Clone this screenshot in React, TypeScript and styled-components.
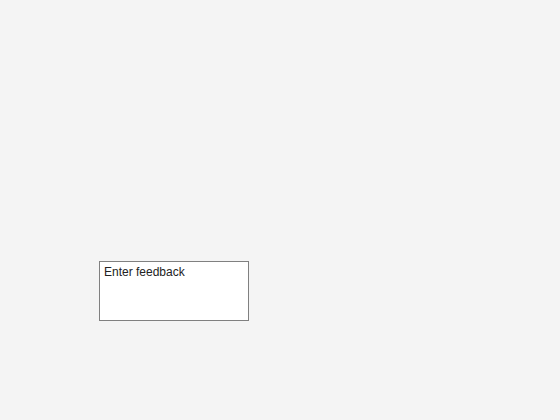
import styled, { createGlobalStyle } from 'styled-components';

const GlobalStyle = createGlobalStyle`
    html, body {
        margin: 0;
        padding: 0;
        background: #f4f4f4;
    }
`;

const Page = styled.main`
    min-height: 420px;
    box-sizing: border-box;
    padding: 261px 0 0 99px;
    display: flex;
    align-items: flex-start;
`;

const FeedbackBox = styled.textarea`
    box-sizing: border-box;
    width: 150px;
    height: 60px;
    margin: 0;
    padding: 3px 4px;
    border: 1px solid #808080;
    border-radius: 0;
    background: #fff;
    color: #222;
    font-family: 'Liberation Sans', Arial, sans-serif;
    font-size: 12px;
    line-height: 14px;
    resize: none;
    outline: none;
`;

const App = () => (
    <>
        <GlobalStyle />
        <Page>
            <FeedbackBox defaultValue='Enter feedback' />
        </Page>
    </>
);

export default App;
